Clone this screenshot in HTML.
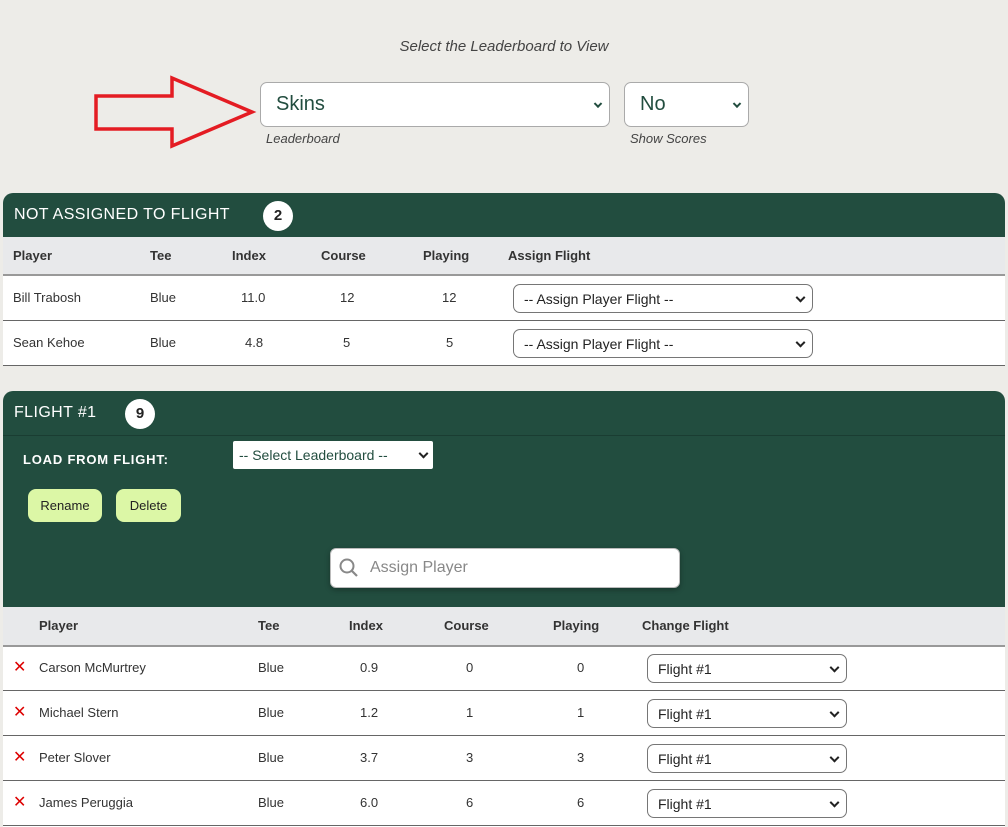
<!DOCTYPE html>
<html><head><meta charset="utf-8"><style>
*{box-sizing:border-box;margin:0;padding:0}
body{width:1008px;height:827px;background:#edece8;font-family:"Liberation Sans",sans-serif;position:relative;overflow:hidden;color:#333}
.a{position:absolute}
.sel{position:absolute;background:#fff;border:1px solid #767676;border-radius:7px;font-size:14px;color:#222;padding-left:10px;display:flex;align-items:center}
.chev{position:absolute;right:8px;top:50%;width:7px;height:7px;border-right:2px solid #222;border-bottom:2px solid #222;transform:translateY(-70%) rotate(45deg)}
.th{position:absolute;font-size:13px;font-weight:bold;color:#333}
.td{position:absolute;font-size:13px;color:#333}
.line{position:absolute;left:3px;width:1002px;height:1px;background:#666}
.badge{position:absolute;width:30px;height:30px;border-radius:50%;background:#fff;color:#222;font-weight:bold;font-size:15px;text-align:center;line-height:30px}
.x{position:absolute;color:#d00;font-size:16px}
.btn{position:absolute;background:#dcf7a6;border-radius:8px;font-size:13px;color:#222;text-align:center;line-height:33px;height:33px;top:489px}
</style></head><body>
<div class="a" style="left:0;width:1008px;top:38px;text-align:center;font-style:italic;font-size:15px;color:#444">Select the Leaderboard to View</div>
<svg class="a" style="left:90px;top:72px" width="170" height="80"><polygon points="6,24 82,24 82,6 162,40 82,74 82,57 6,57" fill="none" stroke="#e41c23" stroke-width="3.5"/></svg>
<div class="sel" style="left:260px;top:82px;width:350px;height:45px;font-size:20px;color:#224d3f;padding-left:15px;border-color:#aaa">Skins<span class="chev" style="border-color:#224d3f;width:6px;height:6px"></span></div>
<div class="sel" style="left:624px;top:82px;width:125px;height:45px;font-size:20px;color:#224d3f;padding-left:15px;border-color:#aaa">No<span class="chev" style="border-color:#224d3f;width:6px;height:6px"></span></div>
<div class="a" style="left:266px;top:131px;font-style:italic;font-size:13px;color:#444">Leaderboard</div>
<div class="a" style="left:630px;top:131px;font-style:italic;font-size:13px;color:#444">Show Scores</div>

<div class="a" style="left:3px;top:193px;width:1002px;height:44px;background:#224d3f;border-radius:10px 10px 0 0"></div>
<div class="a" style="left:14px;top:206px;color:#fff;font-size:16px;letter-spacing:.4px">NOT ASSIGNED TO FLIGHT</div>
<div class="badge" style="left:263px;top:201px">2</div>
<div class="a" style="left:3px;top:237px;width:1002px;height:37px;background:#e8e9eb"></div>
<div class="a" style="left:3px;top:274px;width:1002px;height:91px;background:#fff"></div>
<div class="a" style="left:3px;top:274px;width:1002px;height:2px;background:#999"></div>
<div class="th" style="left:13px;top:248px">Player</div><div class="th" style="left:150px;top:248px">Tee</div><div class="th" style="left:232px;top:248px">Index</div><div class="th" style="left:321px;top:248px">Course</div><div class="th" style="left:423px;top:248px">Playing</div><div class="th" style="left:508px;top:248px">Assign Flight</div>
<div class="td" style="left:13px;top:290px">Bill Trabosh</div><div class="td" style="left:150px;top:290px">Blue</div><div class="td" style="left:241px;top:290px">11.0</div><div class="td" style="left:340px;top:290px">12</div><div class="td" style="left:442px;top:290px">12</div>
<div class="sel" style="left:513px;top:284px;width:300px;height:29px">-- Assign Player Flight --<span class="chev"></span></div>
<div class="line" style="top:320px"></div>
<div class="td" style="left:13px;top:335px">Sean Kehoe</div><div class="td" style="left:150px;top:335px">Blue</div><div class="td" style="left:245px;top:335px">4.8</div><div class="td" style="left:343px;top:335px">5</div><div class="td" style="left:446px;top:335px">5</div>
<div class="sel" style="left:513px;top:329px;width:300px;height:29px">-- Assign Player Flight --<span class="chev"></span></div>
<div class="line" style="top:365px"></div>

<div class="a" style="left:3px;top:391px;width:1002px;height:216px;background:#224d3f;border-radius:10px 10px 0 0"></div>
<div class="a" style="left:3px;top:435px;width:1002px;height:1px;background:#1a3d32"></div>
<div class="a" style="left:14px;top:404px;color:#fff;font-size:16px;letter-spacing:.4px">FLIGHT #1</div>
<div class="badge" style="left:125px;top:399px">9</div>
<div class="a" style="left:23px;top:452px;color:#fff;font-size:13px;font-weight:bold;letter-spacing:.8px">LOAD FROM FLIGHT:</div>
<div class="sel" style="left:233px;top:441px;width:200px;height:28px;border:none;border-radius:2px;padding-left:6px;color:#224d3f">-- Select Leaderboard --<span class="chev" style="right:6px"></span></div>
<div class="btn" style="left:28px;width:74px">Rename</div>
<div class="btn" style="left:116px;width:65px">Delete</div>
<div class="a" style="left:330px;top:548px;width:350px;height:40px;background:#fff;border:1px solid #bbb;border-radius:6px;box-shadow:0 2px 6px rgba(0,0,0,.3)"></div>
<svg class="a" style="left:338px;top:557px" width="22" height="22"><circle cx="9" cy="9" r="6.5" fill="none" stroke="#888" stroke-width="2"/><line x1="13.5" y1="13.5" x2="19" y2="19" stroke="#888" stroke-width="2.2"/></svg>
<div class="a" style="left:370px;top:559px;font-size:16px;color:#888">Assign Player</div>

<div class="a" style="left:3px;top:607px;width:1002px;height:38px;background:#e8e9eb"></div>
<div class="a" style="left:3px;top:645px;width:1002px;height:182px;background:#fff"></div>
<div class="a" style="left:3px;top:645px;width:1002px;height:2px;background:#999"></div>
<div class="th" style="left:39px;top:618px">Player</div><div class="th" style="left:258px;top:618px">Tee</div><div class="th" style="left:349px;top:618px">Index</div><div class="th" style="left:444px;top:618px">Course</div><div class="th" style="left:553px;top:618px">Playing</div><div class="th" style="left:642px;top:618px">Change Flight</div>

<div class="x" style="left:13px;top:657px">✕</div><div class="td" style="left:39px;top:660px">Carson McMurtrey</div><div class="td" style="left:258px;top:660px">Blue</div><div class="td" style="left:360px;top:660px">0.9</div><div class="td" style="left:466px;top:660px">0</div><div class="td" style="left:577px;top:660px">0</div>
<div class="sel" style="left:647px;top:654px;width:200px;height:29px">Flight #1<span class="chev"></span></div>
<div class="line" style="top:690px"></div>
<div class="x" style="left:13px;top:702px">✕</div><div class="td" style="left:39px;top:705px">Michael Stern</div><div class="td" style="left:258px;top:705px">Blue</div><div class="td" style="left:360px;top:705px">1.2</div><div class="td" style="left:466px;top:705px">1</div><div class="td" style="left:577px;top:705px">1</div>
<div class="sel" style="left:647px;top:699px;width:200px;height:29px">Flight #1<span class="chev"></span></div>
<div class="line" style="top:735px"></div>
<div class="x" style="left:13px;top:747px">✕</div><div class="td" style="left:39px;top:750px">Peter Slover</div><div class="td" style="left:258px;top:750px">Blue</div><div class="td" style="left:360px;top:750px">3.7</div><div class="td" style="left:466px;top:750px">3</div><div class="td" style="left:577px;top:750px">3</div>
<div class="sel" style="left:647px;top:744px;width:200px;height:29px">Flight #1<span class="chev"></span></div>
<div class="line" style="top:780px"></div>
<div class="x" style="left:13px;top:792px">✕</div><div class="td" style="left:39px;top:795px">James Peruggia</div><div class="td" style="left:258px;top:795px">Blue</div><div class="td" style="left:360px;top:795px">6.0</div><div class="td" style="left:466px;top:795px">6</div><div class="td" style="left:577px;top:795px">6</div>
<div class="sel" style="left:647px;top:789px;width:200px;height:29px">Flight #1<span class="chev"></span></div>
<div class="line" style="top:825px"></div>
</body></html>
